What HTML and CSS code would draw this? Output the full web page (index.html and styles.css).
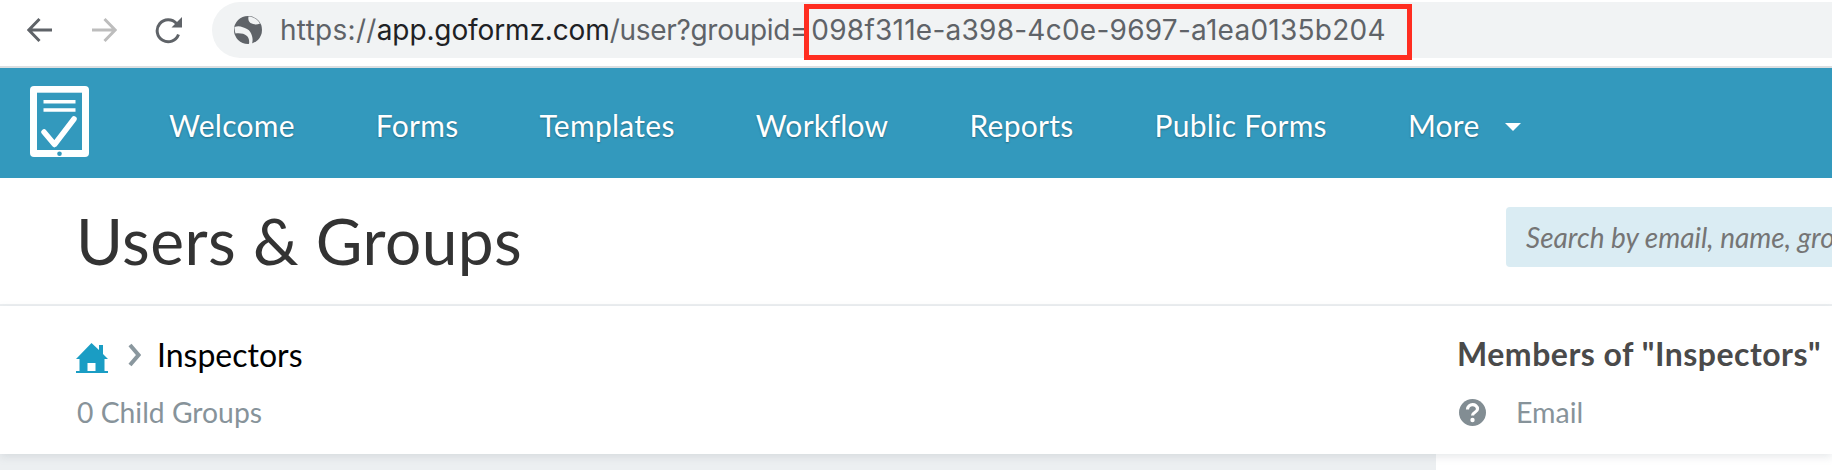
FILE: index.html
```html
<!DOCTYPE html>
<html lang="en">
<head>
<meta charset="utf-8">
<title>Users &amp; Groups</title>
<link rel="stylesheet" href="styles.css">
</head>
<body>
<div class="browser-bar">
  <svg class="tool back" viewBox="0 0 26 26"><path d="M25 13H2.500M12.500 2 1.800 13l10.700 11" fill="none" stroke="#5f6368" stroke-width="3"/></svg>
  <svg class="tool forward" viewBox="0 0 26 26"><path d="M1 13h22.500M13.500 2l10.700 11-10.700 11" fill="none" stroke="#bdbdbd" stroke-width="3"/></svg>
  <svg class="tool reload" viewBox="0 0 27 27"><path d="M23.500 17.500A11 11 0 1 1 21.500 6.500" fill="none" stroke="#5f6368" stroke-width="3"/><path d="M27 0v10.500H16.500z" fill="#5f6368"/></svg>
  <div class="omnibox">
    <svg class="globe" viewBox="0 0 28 28"><circle cx="14" cy="14" r="14" fill="#5f6368"/><path d="M.5 11C5 9 9 11 13 13c3 1.500 4 4 5 7 .8 2.500 .8 5 0 8h-3c.5-3 0-6-2-8-3-2.500-7-3-11.500-2.500C.8 15 .5 13 .5 11zM14.500 .5c-.5 3 0 5 2 6.500 3 1.500 6 2 9.500 .5C23 3 19 .5 14.500 .5z" fill="#f1f3f4"/></svg>
    <div class="url"><span class="scheme">https://</span><span class="host">app.goformz.com</span><span class="path">/user?groupid=</span><span class="uuid">098f311e-a398-4c0e-9697-a1ea0135b204</span></div>
    <div class="highlight"></div>
  </div>
</div>
<header class="app-header">
  <svg class="logo" viewBox="0 0 59 71">
    <rect width="59" height="71" rx="4" fill="#fff"/>
    <rect x="7" y="6.700" width="45" height="57.300" fill="#3399bd"/>
    <path d="M13.500 15.700h32M13.500 24h32" stroke="#fff" stroke-width="3.500"/>
    <path d="M14 46l10.500 12.500L44 33" fill="none" stroke="#fff" stroke-width="5.500" stroke-linecap="round" stroke-linejoin="round"/>
    <circle cx="29.500" cy="67.700" r="2.300" fill="#3399bd"/>
  </svg>
  <nav class="nav">
    <a>Welcome</a><a>Forms</a><a>Templates</a><a>Workflow</a><a>Reports</a><a>Public Forms</a>
    <a class="more">More<span class="caret"></span></a>
  </nav>
</header>
<section class="title-band">
  <h1>Users &amp; Groups</h1>
  <div class="search">Search by email, name, group, or role</div>
</section>
<section class="summary">
  <div class="crumbs-col">
    <div class="crumbs">
      <svg class="home" viewBox="0 0 32 30"><path d="M15.500 0 23 7V2h4v9l5 5h-3.500v13h-25V16H0z" fill="#1a9dc4"/><rect x="11.500" y="20" width="8" height="8" fill="#fff"/><rect x="0" y="28" width="32" height="2" fill="#1a9dc4"/></svg>
      <svg class="chevron" viewBox="0 0 13 24"><path d="M2 2l8.500 10L2 22" fill="none" stroke="#8a979e" stroke-width="4"/></svg>
      <span class="current">Inspectors</span>
    </div>
    <div class="count">0 Child Groups</div>
  </div>
  <div class="members">
    <div class="members-title">Members of "Inspectors"</div>
    <div class="members-row">
      <svg class="help" viewBox="0 0 27 27"><circle cx="13.500" cy="13.500" r="13.500" fill="#828d93"/><path d="M8.500 10.500c0-6.500 10-6.500 10-.5 0 3.500-5 3-5 6.500" fill="none" stroke="#fff" stroke-width="3.200"/><circle cx="13.500" cy="21" r="2.200" fill="#fff"/></svg>
      <span class="email">Email</span>
    </div>
  </div>
</section>
<section class="below">
  <div class="below-left"></div>
  <div class="below-right"></div>
</section>
</body>
</html>
```
FILE: styles.css
```css
* { box-sizing: border-box; }
html, body { margin: 0; padding: 0; width: 1832px; height: 470px; overflow: hidden; background: #fff; }
body { display: flex; flex-direction: column; font-family: Lato, "Noto Sans", sans-serif; }

.browser-bar { height: 68px; flex: none; display: flex; align-items: flex-start; border-bottom: 2px solid #dcdfe1; padding-top: 2px; padding-left: 27px; }
.tool { width: 26px; height: 26px; margin-top: 15px; flex: none; }
.forward { margin-left: 38px; }
.reload { margin-left: 38px; width: 27px; height: 27px; }
.omnibox { position: relative; flex: 1; height: 56px; margin-left: 30px; background: #f1f3f4; border-radius: 28px 0 0 28px; display: flex; align-items: center; padding-left: 22px; }
.globe { width: 28px; height: 28px; flex: none; }
.url { margin-left: 18px; font-family: Inter, Roboto, sans-serif; font-size: 28px; white-space: nowrap; }
.scheme { color: #5f6368; letter-spacing: .3px; }
.host { color: #202124; letter-spacing: -.12px; }
.path { color: #5f6368; letter-spacing: -.3px; }
.uuid { color: #5f6368; letter-spacing: .25px; margin-left: 3px; }
.highlight { position: absolute; left: 592px; top: 2px; width: 608px; height: 56px; border: 5px solid #ff2d20; }

.app-header { height: 110px; flex: none; background: #3399bd; display: flex; align-items: center; padding-left: 30px; }
.logo { width: 59px; height: 71px; flex: none; margin-top: -3px; }
.nav { display: flex; gap: 81px; margin-left: 80px; padding-top: 3px; color: #fff; font-size: 30px; letter-spacing: .28px; text-shadow: 0 1px 2px rgba(0, 0, 0, .3); }
.nav a { white-space: nowrap; }
.more { display: flex; align-items: center; }
.caret { width: 0; height: 0; margin-left: 25px; border: 8px solid transparent; border-top: 8px solid #fff; border-bottom: 0; margin-top: 4px; }

.title-band { height: 128px; flex: none; border-bottom: 2px solid #eceff1; display: grid; grid-template-columns: 1506px 326px; align-items: center; }
.title-band h1 { margin: 0 0 2px 76px; font-weight: 400; font-size: 64px; letter-spacing: .45px; color: #333; white-space: nowrap; }
.search { height: 60px; margin-top: -8px; background: #daecf3; border-radius: 4px 0 0 4px; padding-left: 20px; line-height: 60px; font-size: 28px; font-style: italic; color: #757575; white-space: nowrap; overflow: hidden; }

.summary { height: 148px; flex: none; display: grid; grid-template-columns: 1457px 1fr; background: #fff; box-shadow: 0 3px 8px rgba(120, 135, 145, .18); position: relative; }
.crumbs-col { padding-left: 76px; padding-top: 28px; }
.crumbs { display: flex; align-items: center; height: 40px; }
.home { width: 32px; height: 30px; flex: none; margin-top: 8px; }
.chevron { width: 13px; height: 24px; flex: none; margin-left: 20px; margin-top: 2px; }
.current { margin-left: 16px; font-size: 32px; color: #000; }
.count { margin-left: 1px; margin-top: 21px; font-size: 28.300px; color: #87939a; }
.members { padding-top: 28px; }
.members-title { height: 40px; line-height: 40px; font-size: 32px; font-weight: 700; letter-spacing: .5px; color: #4a4a4a; white-space: nowrap; }
.members-row { display: flex; align-items: center; margin-top: 21px; padding-left: 2px; }
.help { width: 27px; height: 27px; flex: none; }
.email { margin-left: 30px; font-size: 28.500px; color: #87939a; }

.below { flex: 1; display: grid; grid-template-columns: 1436px 1fr; }
.below-left { background: #eceff1; }
.below-right { background: #fff; }
```
